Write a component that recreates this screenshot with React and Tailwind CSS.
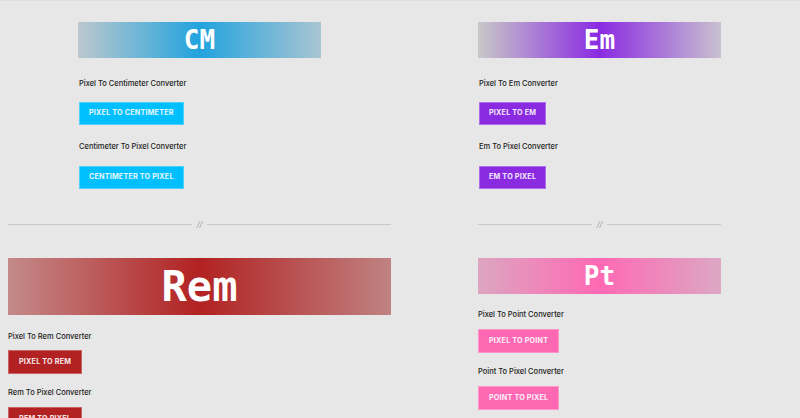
import React from 'react';

const mono = { fontFamily: '"DejaVu Sans Mono", "Liberation Mono", monospace' };

const Banner = ({ text, gradient, tall }) => (
  <div className={`${gradient} ${tall ? 'h-[57px] text-[42px]' : 'h-[36px] text-[26px]'} flex items-center justify-center font-bold text-white`} style={mono}>
    {text}
  </div>
);

const Label = ({ children, className = '' }) => (
  <p className={`text-[7.5px] leading-[12px] font-medium text-[#222] ${className}`}>{children}</p>
);

const Btn = ({ children, color, className = '' }) => (
  <button className={`${color} ${className} block px-[9px] text-[7.2px] font-bold uppercase tracking-[0.2px] text-white/90 border border-white/30`}>
    {children}
  </button>
);

const Divider = ({ className = '' }) => (
  <div className={`flex items-center h-[12px] ${className}`}>
    <div className="flex-1 h-px bg-[#c9c9c9]" />
    <span className="px-[5px] text-[8px] italic text-[#999]">//</span>
    <div className="flex-1 h-px bg-[#c9c9c9]" />
  </div>
);

export default function App() {
  return (
    <div className="w-[800px] h-[418px] overflow-hidden bg-[#e7e7e7] border-t border-[#dedede]" style={{ fontFamily: 'Inter, "Noto Sans", sans-serif' }}>
      <div className="flex pt-[21px]">
        {/* Left column */}
        <div className="w-[400px]">
          <div className="w-[243px] ml-[78px]">
            <Banner text="CM" gradient="bg-[linear-gradient(90deg,#bcc8ce,#22a3de_50%,#a9c5d3)]" />
            <Label className="mt-[20px] ml-px">Pixel To Centimeter Converter</Label>
            <Btn color="bg-[#00bfff] h-[23px] mt-[12px] ml-px">Pixel To Centimeter</Btn>
            <Label className="mt-[16px] ml-px">Centimeter To Pixel Converter</Label>
            <Btn color="bg-[#00bfff] h-[23px] mt-[13px] ml-px">Centimeter To Pixel</Btn>
          </div>
          <Divider className="mx-[8px] mt-[29px] w-[383px]" />
          <div className="ml-[8px] w-[383px] mt-[28px]">
            <Banner tall text="Rem" gradient="bg-[linear-gradient(90deg,#c48a8a,#b22222_50%,#c08282)]" />
            <Label className="mt-[16px]">Pixel To Rem Converter</Label>
            <Btn color="bg-[#b22222] h-[24px] mt-[7px] px-[10px]">Pixel To Rem</Btn>
            <Label className="mt-[13px]">Rem To Pixel Converter</Label>
            <Btn color="bg-[#b22222] h-[24px] mt-[8px] px-[10px]">Rem To Pixel</Btn>
          </div>
        </div>
        {/* Right column */}
        <div className="w-[400px]">
          <div className="w-[243px] ml-[78px]">
            <Banner text="Em" gradient="bg-[linear-gradient(90deg,#c8c8c8,#8a2be2_50%,#c9c1d0)]" />
            <Label className="mt-[20px] ml-px">Pixel To Em Converter</Label>
            <Btn color="bg-[#8a2be2] h-[23px] mt-[12px] ml-px">Pixel To Em</Btn>
            <Label className="mt-[16px] ml-px">Em To Pixel Converter</Label>
            <Btn color="bg-[#8a2be2] h-[23px] mt-[13px] ml-px">Em To Pixel</Btn>
            <Divider className="mt-[29px]" />
            <div className="mt-[28px]">
              <Banner text="Pt" gradient="bg-[linear-gradient(90deg,#dca6c0,#ff69b4_50%,#dca8c4)]" />
              <Label className="mt-[15px]">Pixel To Point Converter</Label>
              <Btn color="bg-[#ff69b4] h-[24px] mt-[8px] px-[10px]">Pixel To Point</Btn>
              <Label className="mt-[13px]">Point To Pixel Converter</Label>
              <Btn color="bg-[#ff69b4] h-[24px] mt-[8px] px-[10px]">Point To Pixel</Btn>
            </div>
          </div>
        </div>
      </div>
    </div>
  );
}
